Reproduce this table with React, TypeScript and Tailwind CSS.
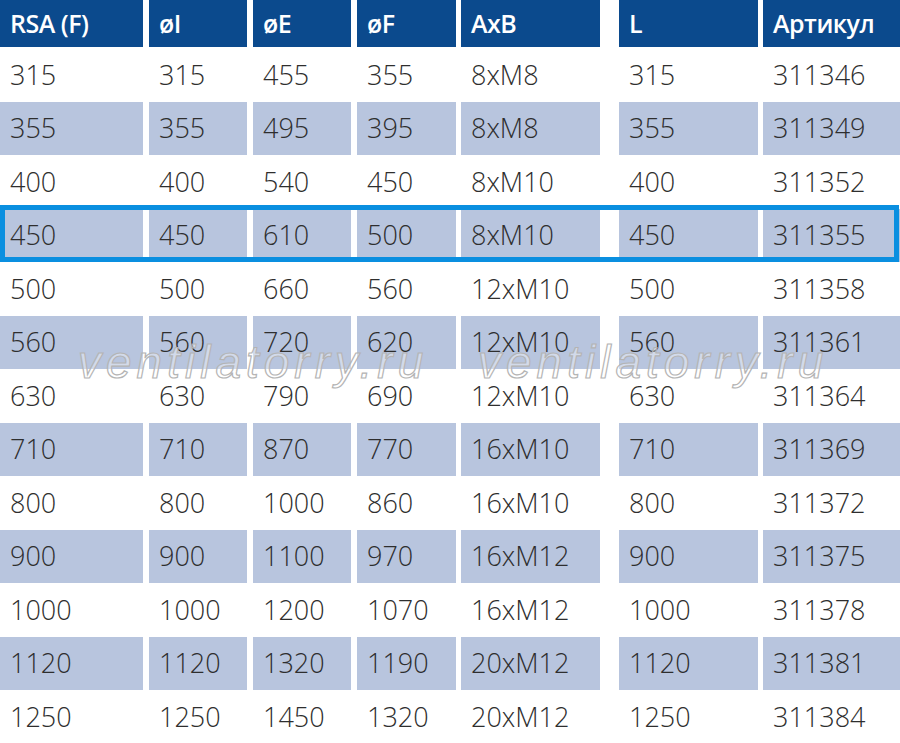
const headers = ["RSA (F)", "øI", "øE", "øF", "AxB", "L", "Артикул"];

const rows: string[][] = [
  ["315", "315", "455", "355", "8xM8", "315", "311346"],
  ["355", "355", "495", "395", "8xM8", "355", "311349"],
  ["400", "400", "540", "450", "8xM10", "400", "311352"],
  ["450", "450", "610", "500", "8xM10", "450", "311355"],
  ["500", "500", "660", "560", "12xM10", "500", "311358"],
  ["560", "560", "720", "620", "12xM10", "560", "311361"],
  ["630", "630", "790", "690", "12xM10", "630", "311364"],
  ["710", "710", "870", "770", "16xM10", "710", "311369"],
  ["800", "800", "1000", "860", "16xM10", "800", "311372"],
  ["900", "900", "1100", "970", "16xM12", "900", "311375"],
  ["1000", "1000", "1200", "1070", "16xM12", "1000", "311378"],
  ["1120", "1120", "1320", "1190", "20xM12", "1120", "311381"],
  ["1250", "1250", "1450", "1320", "20xM12", "1250", "311384"],
];

// column widths + left margins, read off the screenshot
const cols = [
  "w-[143px]",
  "w-[98px] ml-[6px]",
  "w-[98px] ml-[6px]",
  "w-[99px] ml-[6px]",
  "w-[139px] ml-[5px]",
  "w-[139px] ml-[19px]",
  "w-[137px] ml-[5px]",
];

function Watermark({ className }: { className: string }) {
  return (
    <div
      className={`absolute pointer-events-none italic text-[46px] leading-none tracking-[5px] text-white/40 [-webkit-text-stroke:1.2px_#b4b4b4] ${className}`}
      style={{ fontFamily: '"Liberation Sans", Arial, sans-serif' }}
    >
      ventilatorry.ru
    </div>
  );
}

export default function App() {
  return (
    <div
      className="relative w-[900px] h-[743px] bg-white overflow-hidden"
      style={{ fontFamily: '"Open Sans", "Noto Sans", sans-serif' }}
    >
      <div className="flex h-[48px]">
        {headers.map((h, i) => (
          <div
            key={h}
            className={`${cols[i]} h-[47px] bg-[#0b4a8d] text-white font-semibold text-[25px] tracking-[-0.5px] flex items-center pl-[10px]`}
          >
            {h}
          </div>
        ))}
      </div>

      {rows.map((r, ri) => {
        const shaded = ri % 2 === 1 || ri === 3;
        return (
          <div key={ri} className="relative flex h-[53.5px]">
            {r.map((c, ci) => (
              <div
                key={ci}
                className={`${cols[ci]} h-full flex items-center pl-[10px] text-[27px] font-light text-[#2e2e2e] ${shaded ? "bg-[#b8c5de]" : ""}`}
              >
                {c}
              </div>
            ))}
            {ri === 3 && (
              <div className="absolute left-0 right-px top-[-4px] bottom-[0px] border-[5px] border-[#0a8fe0] pointer-events-none" />
            )}
          </div>
        );
      })}

      <Watermark className="left-[78px] top-[339px]" />
      <Watermark className="left-[478px] top-[339px]" />
    </div>
  );
}
